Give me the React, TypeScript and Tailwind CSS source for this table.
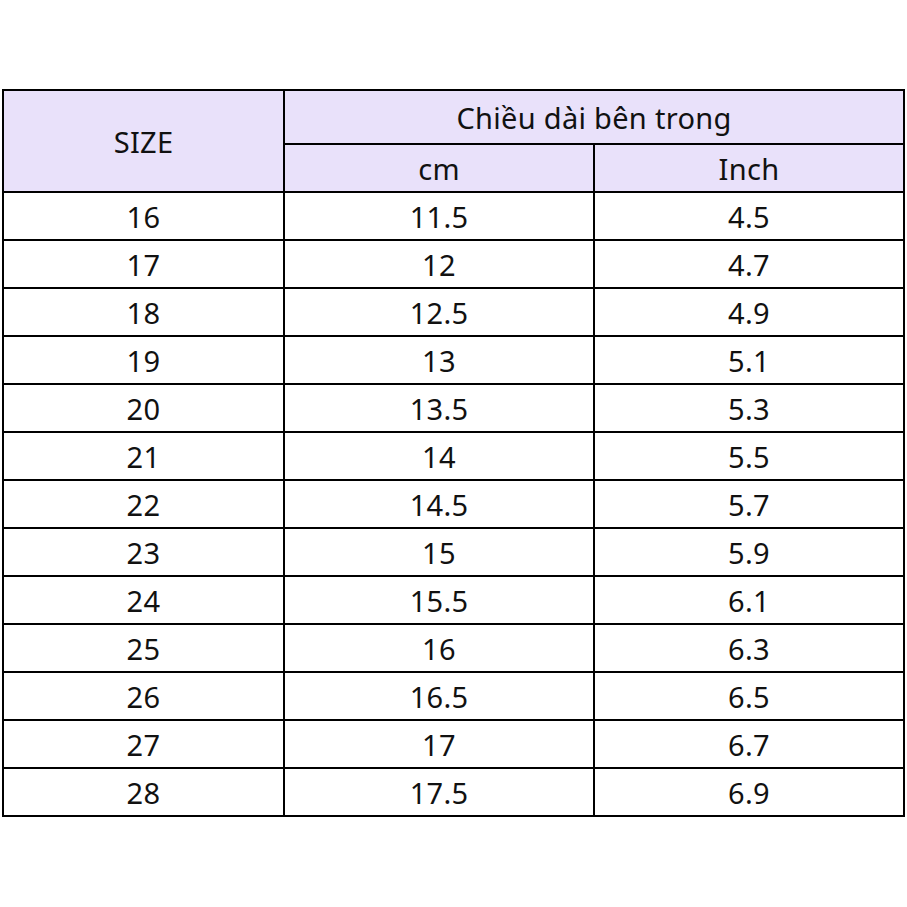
import React from 'react';

const rows: [string, string, string][] = [
  ['16', '11.5', '4.5'],
  ['17', '12', '4.7'],
  ['18', '12.5', '4.9'],
  ['19', '13', '5.1'],
  ['20', '13.5', '5.3'],
  ['21', '14', '5.5'],
  ['22', '14.5', '5.7'],
  ['23', '15', '5.9'],
  ['24', '15.5', '6.1'],
  ['25', '16', '6.3'],
  ['26', '16.5', '6.5'],
  ['27', '17', '6.7'],
  ['28', '17.5', '6.9'],
];

export default function App() {
  const cell = 'border-2 border-black text-center p-0 font-normal leading-none';
  return (
    <div
      className="w-[907px] h-[907px] bg-white pt-[89px] pl-[2px] text-[#111] text-[29px] tracking-[0.3px]"
      style={{ fontFamily: '"Noto Sans", "Open Sans", sans-serif' }}
    >
      <table className="w-[901px] table-fixed border-collapse">
        <colgroup>
          <col className="w-[281px]" />
          <col className="w-[310px]" />
          <col className="w-[310px]" />
        </colgroup>
        <thead className="bg-[#e9e1fa]">
          <tr className="h-[54px]">
            <th rowSpan={2} className={cell}>SIZE</th>
            <th colSpan={2} className={cell}>Chiều dài bên trong</th>
          </tr>
          <tr className="h-[48px]">
            <th className={cell}>cm</th>
            <th className={cell}>Inch</th>
          </tr>
        </thead>
        <tbody>
          {rows.map((r) => (
            <tr key={r[0]} className="h-[48px]">
              <td className={cell}>{r[0]}</td>
              <td className={cell}>{r[1]}</td>
              <td className={cell}>{r[2]}</td>
            </tr>
          ))}
        </tbody>
      </table>
    </div>
  );
}
